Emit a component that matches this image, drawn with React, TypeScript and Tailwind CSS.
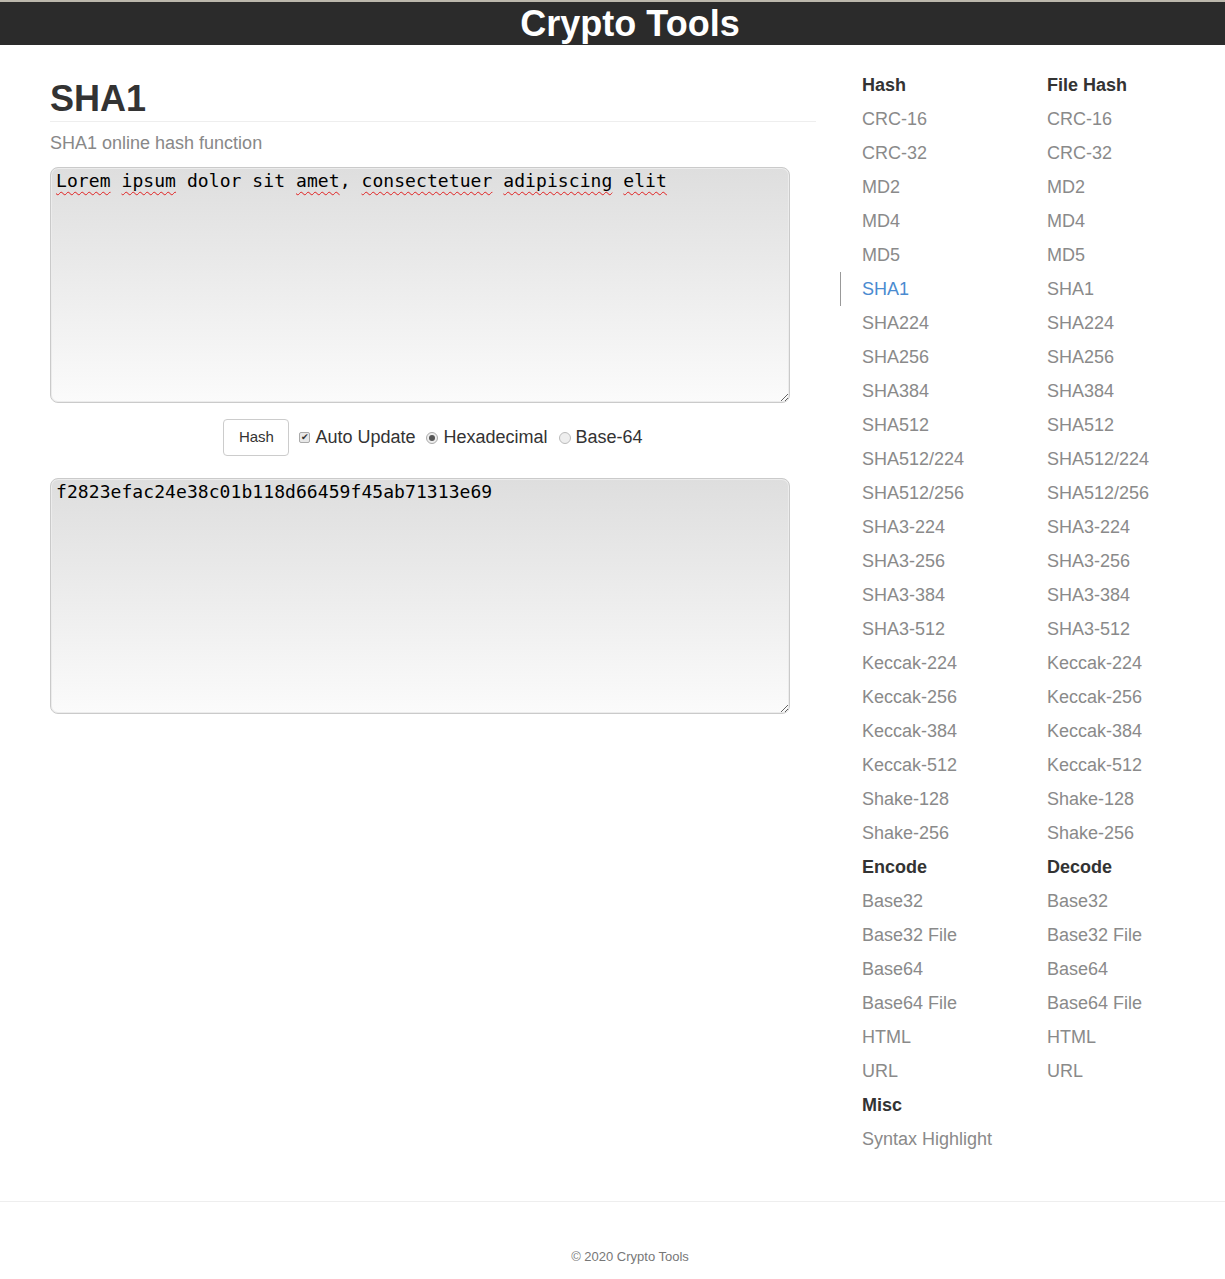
import React from "react";

const hashItems = [
  "CRC-16",
  "CRC-32",
  "MD2",
  "MD4",
  "MD5",
  "SHA1",
  "SHA224",
  "SHA256",
  "SHA384",
  "SHA512",
  "SHA512/224",
  "SHA512/256",
  "SHA3-224",
  "SHA3-256",
  "SHA3-384",
  "SHA3-512",
  "Keccak-224",
  "Keccak-256",
  "Keccak-384",
  "Keccak-512",
  "Shake-128",
  "Shake-256",
];

const codecItems = ["Base32", "Base32 File", "Base64", "Base64 File", "HTML", "URL"];

const sans = "font-['Liberation_Sans',Arial,sans-serif]";
const mono = "font-['DejaVu_Sans_Mono',monospace]";

const NavHeader: React.FC<{ text: string }> = ({ text }) => (
  <div className="h-[34px] leading-[34px] pl-[22px] text-[18px] font-bold text-[#333]">
    {text}
  </div>
);

const NavItem: React.FC<{ text: string; active?: boolean }> = ({ text, active }) => (
  <div
    className={
      active
        ? "h-[34px] leading-[34px] pl-[21px] border-l border-[#999] text-[18px] text-[#4a8bd0]"
        : "h-[34px] leading-[34px] pl-[22px] text-[18px] text-[#8a8a8a]"
    }
  >
    {text}
  </div>
);

const Wavy: React.FC<{ children: React.ReactNode }> = ({ children }) => (
  <span className="underline decoration-wavy decoration-[#e02020] decoration-1 underline-offset-[4px]">
    {children}
  </span>
);

const Box: React.FC<{ children: React.ReactNode }> = ({ children }) => (
  <div
    className={`h-[236px] w-[740px] rounded-[8px] border border-[#cacaca] shadow-[inset_0_0_0_1px_#ececec] bg-gradient-to-b from-[#dedede] to-[#fbfbfb] px-[5px] pt-[1px] ${mono} text-[18px] leading-[24px] tracking-[0.07px] text-black overflow-auto resize whitespace-pre`}
  >
    {children}
  </div>
);

export default function App() {
  return (
    <div className={`${sans} bg-white min-h-[1279px]`}>
      <header className="border-t-2 border-[#bcb8ac] bg-[#2b2b2b] h-[45px] flex items-center justify-center pl-[35px]">
        <span className="text-white text-[36px] font-bold leading-[43px]">Crypto Tools</span>
      </header>

      <div className="flex pl-[50px]">
        <div className="w-[766px] pt-[34px]">
          <h1 className="text-[36px] leading-[40px] font-bold text-[#333] pb-[2px] border-b border-[#eee]">
            SHA1
          </h1>
          <p className="mt-[9px] text-[18px] leading-[24px] text-[#888]">SHA1 online hash function</p>

          <div className="mt-[12px]">
            <Box>
              <Wavy>Lorem</Wavy> <Wavy>ipsum</Wavy> dolor sit <Wavy>amet</Wavy>,{" "}
              <Wavy>consectetuer</Wavy> <Wavy>adipiscing</Wavy> <Wavy>elit</Wavy>
            </Box>
          </div>

          <div className="mt-[16px] w-[740px] flex items-center justify-center pl-[26px]">
            <button className="w-[66px] h-[37px] rounded-[4px] border border-[#ccc] bg-white text-[15px] text-[#333]">
              Hash
            </button>
            <span className="ml-[10px] w-[11px] h-[11px] rounded-[2px] border border-[#aaa] bg-[#e8e8e8] flex items-center justify-center text-[9px] leading-none text-[#333]">
              ✔
            </span>
            <span className="ml-[5px] text-[18px] text-[#333]">Auto Update</span>
            <span className="ml-[11px] w-[12px] h-[12px] rounded-full border border-[#aaa] bg-[#eee] flex items-center justify-center">
              <span className="w-[6px] h-[6px] rounded-full bg-[#555]" />
            </span>
            <span className="ml-[5px] text-[18px] text-[#333]">Hexadecimal</span>
            <span className="ml-[11px] w-[12px] h-[12px] rounded-full border border-[#bbb] bg-[#eee]" />
            <span className="ml-[5px] text-[18px] text-[#333]">Base-64</span>
          </div>

          <div className="mt-[22px]">
            <Box>f2823efac24e38c01b118d66459f45ab71313e69</Box>
          </div>
        </div>

        <nav className="ml-[24px] pt-[23px] grid grid-cols-[185px_185px]">
          <div>
            <NavHeader text="Hash" />
            {hashItems.map((h) => (
              <NavItem key={h} text={h} active={h === "SHA1"} />
            ))}
            <NavHeader text="Encode" />
            {codecItems.map((h) => (
              <NavItem key={h} text={h} />
            ))}
            <NavHeader text="Misc" />
            <NavItem text="Syntax Highlight" />
          </div>
          <div>
            <NavHeader text="File Hash" />
            {hashItems.map((h) => (
              <NavItem key={h} text={h} />
            ))}
            <NavHeader text="Decode" />
            {codecItems.map((h) => (
              <NavItem key={h} text={h} />
            ))}
          </div>
        </nav>
      </div>

      <footer className="mt-[45px] border-t border-[#eee] pt-[42px] pb-[16px] text-center pl-[35px]">
        <span className="text-[13px] leading-[18px] text-[#777]">© 2020 Crypto Tools</span>
      </footer>
    </div>
  );
}
